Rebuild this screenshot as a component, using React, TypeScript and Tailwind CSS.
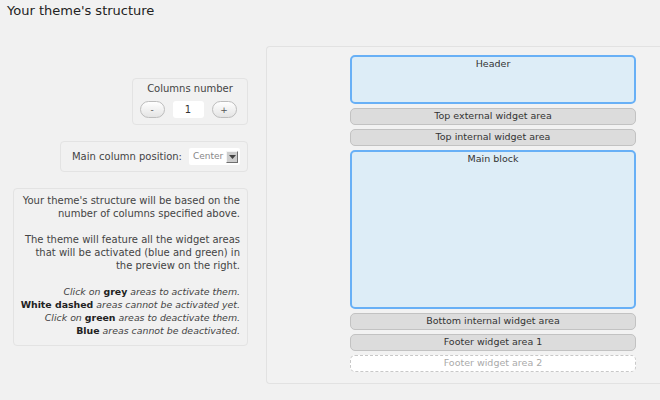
import React from "react";

function Area({ label, kind }: { label: string; kind: "gray" | "dashed" }) {
  if (kind === "dashed") {
    return (
      <div className="h-[17px] rounded-[5px] border-[1.5px] border-dashed border-[#c8c8c8] bg-white text-center text-[9.5px] leading-[14px] text-[#aaaaaa]">
        {label}
      </div>
    );
  }
  return (
    <div className="h-[17px] rounded-[5px] border-[1.5px] border-[#c2c2c2] bg-[#dcdcdc] text-center text-[9.5px] leading-[14px] text-[#333]">
      {label}
    </div>
  );
}

export default function App() {
  return (
    <div className="w-[660px] h-[400px] overflow-hidden bg-[#f1f1f1] text-[#444] font-['DejaVu_Sans',sans-serif]">
      <h2 className="pl-[7px] pt-[3px] text-[13px] leading-[16px] text-[#222]">Your theme's structure</h2>
      <div className="flex mt-[27px]">
        <div className="w-[248px] shrink-0 flex flex-col items-end pt-[32px]">
          <div className="w-[116px] h-[47px] rounded-[4px] border border-[#e3e3e3] flex flex-col items-center pt-[3px]">
            <div className="text-[10px] leading-[14px] text-[#444]">Columns number</div>
            <div className="mt-[5px] mr-[4px] flex items-center gap-[8px]">
              <button className="w-[25px] h-[17px] rounded-full border border-[#bdbdbd] bg-gradient-to-b from-white to-[#e4e4e4] text-[9px] leading-[14px] text-[#555]">-</button>
              <div className="w-[31px] h-[17px] rounded-[3px] bg-white text-center text-[10px] leading-[17px] text-[#333]">1</div>
              <button className="w-[25px] h-[17px] rounded-full border border-[#bdbdbd] bg-gradient-to-b from-white to-[#e4e4e4] text-[9px] leading-[14px] text-[#555]">+</button>
            </div>
          </div>
          <div className="mt-[16px] w-[188px] h-[31px] rounded-[4px] border border-[#e3e3e3] flex items-center justify-end pr-[7px]">
            <span className="whitespace-nowrap text-[10px] text-[#444] mr-[7px]">Main column position:</span>
            <div className="w-[51px] h-[17px] bg-white rounded-[2px] flex items-center pl-[4px] pr-[2px]">
              <span className="text-[9px] text-[#888] leading-[17px]">Center</span>
              <span className="ml-auto w-[12px] h-[12px] bg-[#cdcdcd] border border-l-[#f4f4f4] border-t-[#f4f4f4] border-r-[#6f6f6f] border-b-[#6f6f6f] flex items-center justify-center">
                <svg width="7" height="4" viewBox="0 0 7 4"><path d="M0 0h7L3.5 4z" fill="#444" /></svg>
              </span>
            </div>
          </div>
          <div className="mt-[16px] w-[235px] rounded-[4px] border border-[#e3e3e3] pt-[5px] pb-[8px] pr-[7px] pl-[3px] text-right text-[10px] leading-[13px] text-[#444]">
            <p>Your theme's structure will be based on the number of columns specified above.</p>
            <p className="mt-[13px]">The theme will feature all the widget areas that will be activated (blue and green) in the preview on the right.</p>
            <p className="mt-[13px] italic whitespace-nowrap text-[9.4px] leading-[13px]">
              Click on <b className="not-italic font-bold text-[#222]">grey</b> areas to activate them.
              <br />
              <b className="not-italic font-bold text-[#222]">White dashed</b> areas cannot be activated yet.
              <br />
              Click on <b className="not-italic font-bold text-[#222]">green</b> areas to deactivate them.
              <br />
              <b className="not-italic font-bold text-[#222]">Blue</b> areas cannot be deactivated.
            </p>
          </div>
        </div>
        <div className="ml-[18px] w-[420px] shrink-0 h-[338px] rounded-l-[4px] border border-r-0 border-[#e2e2e2] bg-[#f2f2f2] pl-[83px] pt-[8px]">
          <div className="w-[286px] flex flex-col gap-[4px]">
            <div className="h-[49px] rounded-[5px] border-2 border-[#68b0f6] bg-[#ddedf7] text-center text-[9.5px] leading-[14px] text-[#333]">Header</div>
            <Area label="Top external widget area" kind="gray" />
            <Area label="Top internal widget area" kind="gray" />
            <div className="h-[159px] rounded-[5px] border-2 border-[#68b0f6] bg-[#ddedf7] text-center text-[9.5px] leading-[14px] text-[#333]">Main block</div>
            <Area label="Bottom internal widget area" kind="gray" />
            <Area label="Footer widget area 1" kind="gray" />
            <Area label="Footer widget area 2" kind="dashed" />
          </div>
        </div>
      </div>
    </div>
  );
}
